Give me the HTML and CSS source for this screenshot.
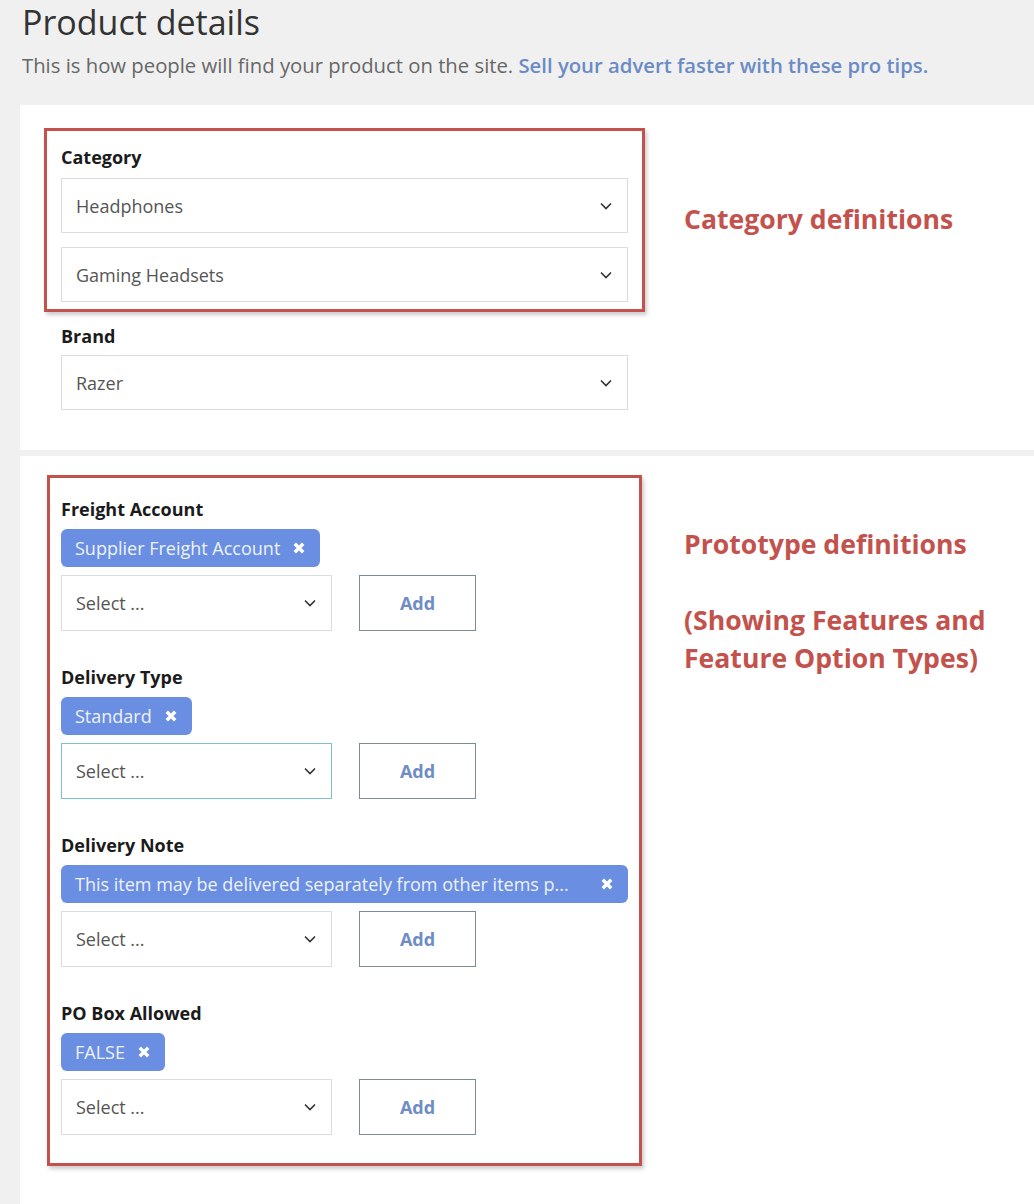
FILE: index.html
```html
<!DOCTYPE html>
<html lang="en">
<head>
    <meta charset="UTF-8">
    <meta name="viewport" content="width=device-width, initial-scale=1.0">
    <title>Product details</title>
    <link rel="stylesheet" href="styles.css">
</head>
<body>
    <h1 class="title">Product details</h1>
    <p class="intro">This is how people will find your product on the site. <a href="#">Sell your advert faster with these pro tips.</a></p>

    <section class="panel panel-category">
        <div class="form-col">
            <div class="callout callout-category">
                <div class="field-label">Category</div>
                <div class="select">
                    <span>Headphones</span>
                    <svg class="chevron" viewBox="0 0 12 8"><path d="M1 1.5 6 6.5 11 1.5"/></svg>
                </div>
                <div class="select select-next">
                    <span>Gaming Headsets</span>
                    <svg class="chevron" viewBox="0 0 12 8"><path d="M1 1.5 6 6.5 11 1.5"/></svg>
                </div>
            </div>
            <div class="brand">
                <div class="field-label">Brand</div>
                <div class="select">
                    <span>Razer</span>
                    <svg class="chevron" viewBox="0 0 12 8"><path d="M1 1.5 6 6.5 11 1.5"/></svg>
                </div>
            </div>
        </div>
        <div class="note note-category">Category definitions</div>
    </section>

    <section class="panel panel-proto">
        <div class="form-col">
            <div class="callout callout-proto">
                <div class="feature">
                    <div class="field-label">Freight Account</div>
                    <span class="tag">Supplier Freight Account
                        <svg class="tag-x" viewBox="0 0 10 10"><path d="M1.5 1.5 8.5 8.5M8.5 1.5 1.5 8.5"/></svg>
                    </span>
                    <div class="feature-row">
                        <div class="select select-sm">
                            <span>Select ...</span>
                            <svg class="chevron" viewBox="0 0 12 8"><path d="M1 1.5 6 6.5 11 1.5"/></svg>
                        </div>
                        <button class="add-btn">Add</button>
                    </div>
                </div>

                <div class="feature">
                    <div class="field-label">Delivery Type</div>
                    <span class="tag">Standard
                        <svg class="tag-x" viewBox="0 0 10 10"><path d="M1.5 1.5 8.5 8.5M8.5 1.5 1.5 8.5"/></svg>
                    </span>
                    <div class="feature-row">
                        <div class="select select-sm focused">
                            <span>Select ...</span>
                            <svg class="chevron" viewBox="0 0 12 8"><path d="M1 1.5 6 6.5 11 1.5"/></svg>
                        </div>
                        <button class="add-btn">Add</button>
                    </div>
                </div>

                <div class="feature">
                    <div class="field-label">Delivery Note</div>
                    <span class="tag tag-wide">This item may be delivered separately from other items p...
                        <svg class="tag-x" viewBox="0 0 10 10"><path d="M1.5 1.5 8.5 8.5M8.5 1.5 1.5 8.5"/></svg>
                    </span>
                    <div class="feature-row">
                        <div class="select select-sm">
                            <span>Select ...</span>
                            <svg class="chevron" viewBox="0 0 12 8"><path d="M1 1.5 6 6.5 11 1.5"/></svg>
                        </div>
                        <button class="add-btn">Add</button>
                    </div>
                </div>

                <div class="feature">
                    <div class="field-label">PO Box Allowed</div>
                    <span class="tag">FALSE
                        <svg class="tag-x" viewBox="0 0 10 10"><path d="M1.5 1.5 8.5 8.5M8.5 1.5 1.5 8.5"/></svg>
                    </span>
                    <div class="feature-row">
                        <div class="select select-sm">
                            <span>Select ...</span>
                            <svg class="chevron" viewBox="0 0 12 8"><path d="M1 1.5 6 6.5 11 1.5"/></svg>
                        </div>
                        <button class="add-btn">Add</button>
                    </div>
                </div>
            </div>
        </div>
        <div class="note note-proto">Prototype definitions<br><br>(Showing Features and<br>Feature Option Types)</div>
    </section>
</body>
</html>
```

FILE: styles.css
```css
body {
    font-family: "Open Sans", Arial, sans-serif;
    background-color: #f0f0f0;
    margin: 0;
    padding: 0;
    color: #333;
}

.title {
    font-size: 34px;
    font-weight: 400;
    line-height: 40px;
    color: #333;
    margin: 2px 0 0 22px;
}

.intro {
    font-size: 20.3px;
    line-height: 26px;
    color: #676767;
    margin: 10px 0 0 22px;
}

.intro a {
    color: #6b8bc6;
    font-weight: 600;
    text-decoration: none;
}

.panel {
    background-color: #fff;
    margin-left: 20px;
    display: flex;
    align-items: flex-start;
}

.panel-category {
    margin-top: 27px;
    padding: 23px 0 40px 24px;
}

.panel-proto {
    margin-top: 6px;
    padding: 19px 0 60px 27px;
}

.callout {
    border: 3px solid #c3524d;
    box-shadow: 2px 3px 4px rgba(0, 0, 0, 0.2);
}

.callout-category {
    width: 567px;
    padding: 15px 14px 7px 14px;
}

.callout-proto {
    width: 567px;
    padding: 20px 11px 28px 11px;
}

.field-label {
    font-size: 18px;
    font-weight: 700;
    line-height: 22px;
    color: #1b1b1b;
    margin-bottom: 9px;
}

.callout-category .field-label {
    margin-bottom: 10px;
}

.select {
    box-sizing: border-box;
    height: 55px;
    border: 1px solid #dcdcdc;
    padding: 0 15px 0 14px;
    display: flex;
    align-items: center;
    justify-content: space-between;
    font-size: 18px;
    color: #555;
    background-color: #fff;
}

.select-next {
    margin-top: 14px;
}

.select.focused {
    border-color: #7fc1ca;
}

.chevron {
    width: 12px;
    height: 8px;
    fill: none;
    stroke: #333;
    stroke-width: 1.6;
}

.brand {
    margin-top: 13px;
    padding: 0 17px;
}

.brand .field-label {
    margin-bottom: 8px;
}

.note {
    font-size: 26.6px;
    font-weight: 700;
    line-height: 38px;
    color: #c3524d;
}

.note-category {
    margin: 72px 0 0 39px;
}

.note-proto {
    margin: 50px 0 0 42px;
}

.feature + .feature {
    margin-top: 35px;
}

.tag {
    box-sizing: border-box;
    height: 38px;
    padding: 0 15px 0 14px;
    display: inline-flex;
    align-items: center;
    background-color: #6a8ee1;
    color: #eef2fc;
    font-size: 18px;
    border-radius: 6px;
    white-space: nowrap;
}

.tag-wide {
    display: flex;
    justify-content: space-between;
}

.tag-x {
    width: 12px;
    height: 12px;
    margin-left: 13px;
    fill: none;
    stroke: #fff;
    stroke-width: 2.8;
}

.feature-row {
    display: flex;
    margin-top: 8px;
}

.feature-row .select-sm {
    width: 271px;
    height: 56px;
}

.add-btn {
    width: 117px;
    height: 56px;
    margin-left: 27px;
    background-color: #fff;
    border: 1px solid #7a8d99;
    font-family: "Open Sans", Arial, sans-serif;
    font-size: 18px;
    font-weight: 700;
    color: #6f8cc4;
    cursor: pointer;
}
```
